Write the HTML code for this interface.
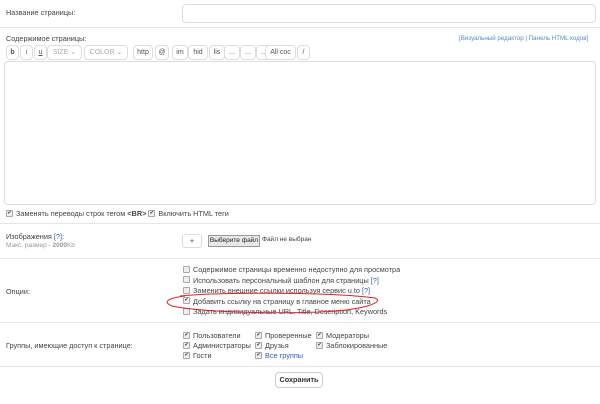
<!DOCTYPE html>
<html><head><meta charset="utf-8"><style>
body{margin:0;width:600px;height:404px;background:#fff;font-family:"Liberation Sans","DejaVu Sans",sans-serif;font-size:7.3px;color:#444;position:relative;overflow:hidden}
.a{position:absolute;white-space:nowrap}
.hr{position:absolute;left:0;width:600px;height:1px;background:#e6e6e6}
.b{position:absolute;top:45px;height:13px;border:1px solid #ddd;border-radius:4px;background:#fff;font-size:7px;line-height:13px;text-align:center;color:#555;overflow:hidden}
.cb{display:inline-block;width:5px;height:5px;border:1px solid #aaa;background:#eee;border-radius:1px;vertical-align:middle;margin:-2px 3px 0 0;font-size:5px;line-height:5px;text-align:center;color:#333}
a{color:#2a5db0;text-decoration:none}
</style></head><body>
<div class="a" style="left:6px;top:8px">Название страницы:</div>
<div class="a" style="left:182px;top:4px;width:412px;height:17px;border:1px solid #ddd;border-radius:4px"></div>
<div class="hr" style="top:27px"></div>
<div class="a" style="left:6px;top:34px">Содержимое страницы:</div>
<div class="a" style="left:459px;top:35px;font-size:6.2px;color:#5b8ac6">[Визуальный редактор | Панель HTML кодов]</div>
<div class="b" style="left:6px;width:11px;font-weight:bold">b</div>
<div class="b" style="left:20px;width:11px;font-style:italic">i</div>
<div class="b" style="left:34px;width:11px;text-decoration:underline">u</div>
<div class="b" style="left:47px;width:33px;color:#aaa">SIZE ⌄</div>
<div class="b" style="left:84px;width:42px;color:#aaa">COLOR ⌄</div>
<div class="b" style="left:133px;width:18px">http</div>
<div class="b" style="left:155px;width:12px">@</div>
<div class="b" style="left:172px;width:14px">im</div>
<div class="b" style="left:188px;width:18px">hid</div>
<div class="b" style="left:209px;width:14px">lis</div>
<div class="b" style="left:224px;width:14px">…</div>
<div class="b" style="left:240px;width:14px">…</div>
<div class="b" style="left:256px;width:14px">…</div>
<div class="b" style="left:265px;width:29px">All coc</div>
<div class="b" style="left:297px;width:11px">/</div>
<div class="a" style="left:4px;top:61px;width:590px;height:142px;border:1px solid #ddd;border-radius:4px"></div>
<div class="a" style="left:6px;top:209px"><span class="cb">✔</span>Заменять переводы строк тегом <b>&lt;BR&gt;</b> <span class="cb">✔</span>Включить HTML теги</div>
<div class="hr" style="top:223px"></div>
<div class="a" style="left:6px;top:232px">Изображения <a>[?]</a>:</div>
<div class="a" style="left:6px;top:242px;font-size:6.5px;color:#999">Макс. размер - <b>2000</b>Kb</div>
<div class="a" style="left:182px;top:234px;width:18px;height:12px;border:1px solid #ddd;border-radius:3px;text-align:center;line-height:12px">+</div>
<div class="a" style="left:208px;top:235px;width:50px;height:10px;border:1px solid #999;background:#e8e8e8;font-size:6.5px;line-height:10px;text-align:center;color:#222">Выберите файл</div>
<div class="a" style="left:262px;top:236px;font-size:6.5px">Файл не выбран</div>
<div class="hr" style="top:258px"></div>
<div class="a" style="left:6px;top:287px">Опции:</div>
<div class="a" style="left:183px;top:265px;line-height:10.5px"><span class="cb"></span>Содержимое страницы временно недоступно для просмотра<br><span class="cb"></span>Использовать персональный шаблон для страницы <a>[?]</a><br><span class="cb"></span>Заменить внешние ссылки используя сервис u.to <a>[?]</a><br><span class="cb">✔</span>Добавить ссылку на страницу в главное меню сайта<br><span class="cb"></span>Задать индивидуальные URL, Title, Description, Keywords</div>
<svg class="a" style="left:160px;top:290px" width="230" height="30"><path d="M20 6 C60 2,170 2,215 8 C225 12,205 20,160 22 C110 24,40 22,12 16 C2 12,8 8,25 6" fill="none" stroke="#d22" stroke-width="1"/></svg>
<div class="hr" style="top:322px"></div>
<div class="a" style="left:6px;top:341px">Группы, имеющие доступ к странице:</div>
<div class="a" style="left:183px;top:331px;line-height:10px"><span class="cb">✔</span>Пользователи<br><span class="cb">✔</span>Администраторы<br><span class="cb">✔</span>Гости</div>
<div class="a" style="left:255px;top:331px;line-height:10px"><span class="cb">✔</span>Проверенные<br><span class="cb">✔</span>Друзья<br><span class="cb">✔</span><a>Все группы</a></div>
<div class="a" style="left:316px;top:331px;line-height:10px"><span class="cb">✔</span>Модераторы<br><span class="cb">✔</span>Заблокированные</div>
<div class="hr" style="top:366px"></div>
<div class="a" style="left:275px;top:372px;width:46px;height:14px;border:1px solid #ccc;border-radius:4px;text-align:center;line-height:14px;font-weight:bold;color:#333">Сохранить</div>
</body></html>
